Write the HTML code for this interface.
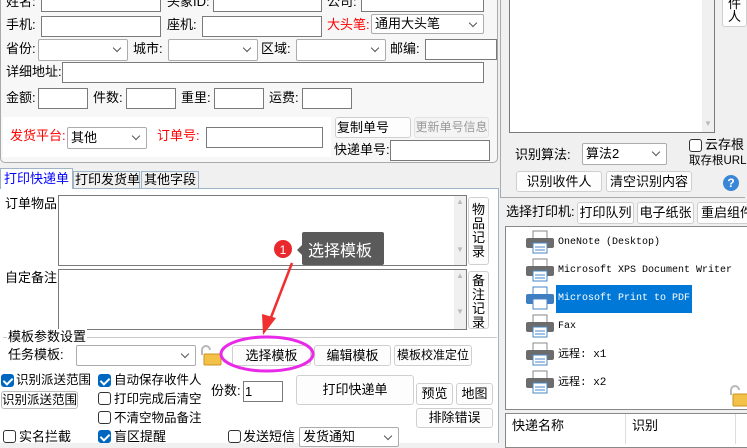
<!DOCTYPE html>
<html><head><meta charset="utf-8"><style>
*{box-sizing:border-box;margin:0;padding:0}
body{width:747px;height:443px;overflow:hidden;background:#f0f0f0;font-family:"Liberation Sans","Noto Sans CJK SC",sans-serif;font-size:13px;color:#000;position:relative}
.a{position:absolute;white-space:nowrap}
.t{position:absolute;white-space:nowrap;line-height:16px}
.in{position:absolute;background:#fff;border:1px solid #7a7a7a}
.sel{position:absolute;background:#fff;border:1px solid #acacac;border-radius:2px;padding-left:3px;line-height:18px;font-size:13px;white-space:nowrap}
.sel:after{content:"";position:absolute;right:7px;top:5px;width:5px;height:5px;border-right:1px solid #555;border-bottom:1px solid #555;transform:rotate(45deg)}
.btn{position:absolute;background:#fdfdfd;border:1px solid #cfcfcf;border-radius:3px;text-align:center;font-size:13px;white-space:nowrap;overflow:hidden}
.btn.v{white-space:normal;padding-left:3px;padding-right:3px}
.red{color:#f00}
.cb{position:absolute;width:13px;height:13px;border:1px solid #333;border-radius:3px;background:#fff}
.cb.on{background:#0067c0;border-color:#0067c0}
.cb.on:after{content:"";position:absolute;left:3px;top:1px;width:4px;height:7px;border-right:2px solid #fff;border-bottom:2px solid #fff;transform:rotate(45deg)}
.mono{font-family:"Liberation Mono","Noto Sans CJK SC",monospace;font-size:10px}
</style></head><body>
<div class="a" style="left:0;top:-2px;width:498px;height:165px;background:#f7f7f7;border:1px solid #aaa;border-top:none;border-radius:0 0 5px 5px"></div>
<div class="t" style="left:6px;top:-6px">姓名:</div><div class="in" style="left:41px;top:-2px;width:120px;height:14px"></div>
<div class="t" style="left:167px;top:-6px">头象ID:</div><div class="in" style="left:213px;top:-2px;width:109px;height:14px"></div>
<div class="t" style="left:327px;top:-6px">公司:</div><div class="in" style="left:361px;top:-2px;width:123px;height:14px"></div>
<div class="t" style="left:6px;top:17px">手机:</div><div class="in" style="left:41px;top:16px;width:120px;height:21px"></div>
<div class="t" style="left:167px;top:17px">座机:</div><div class="in" style="left:202px;top:16px;width:120px;height:21px"></div>
<div class="t red" style="left:327px;top:17px">大头笔:</div><div class="sel" style="left:371px;top:14px;width:113px;height:20px">通用大头笔</div>
<div class="t" style="left:6px;top:41px">省份:</div><div class="sel" style="left:38px;top:39px;width:90px;height:22px"></div>
<div class="t" style="left:133px;top:41px">城市:</div><div class="sel" style="left:168px;top:39px;width:90px;height:22px"></div>
<div class="t" style="left:261px;top:41px">区域:</div><div class="sel" style="left:296px;top:39px;width:90px;height:22px"></div>
<div class="t" style="left:390px;top:41px">邮编:</div><div class="in" style="left:425px;top:39px;width:72px;height:21px"></div>
<div class="t" style="left:6px;top:64px">详细地址:</div><div class="in" style="left:62px;top:62px;width:422px;height:21px"></div>
<div class="t" style="left:6px;top:90px">金额:</div><div class="in" style="left:38px;top:88px;width:50px;height:21px"></div>
<div class="t" style="left:93px;top:90px">件数:</div><div class="in" style="left:126px;top:88px;width:50px;height:21px"></div>
<div class="t" style="left:181px;top:90px">重里:</div><div class="in" style="left:214px;top:88px;width:50px;height:21px"></div>
<div class="t" style="left:269px;top:90px">运费:</div><div class="in" style="left:302px;top:88px;width:50px;height:21px"></div>
<div class="a" style="left:3px;top:117px;width:328px;height:40px;background:#fff"></div>
<div class="t red" style="left:10px;top:128px">发货平台:</div><div class="sel" style="left:67px;top:127px;width:80px;height:22px;line-height:20px">其他</div>
<div class="t red" style="left:157px;top:128px">订单号:</div><div class="in" style="left:206px;top:127px;width:117px;height:21px"></div>
<div class="btn" style="left:335px;top:117px;width:76px;height:21px;text-align:left;padding-left:1px;line-height:19px">复制单号</div>
<div class="btn" style="left:414px;top:117px;width:75px;height:21px;color:#999;background:#f4f4f4;border-color:#e3e3e3;line-height:19px;font-size:12px">更新单号信息</div>
<div class="t" style="left:334px;top:142px">快递单号:</div><div class="in" style="left:390px;top:140px;width:100px;height:21px"></div>
<div class="a" style="left:0;top:188px;width:499px;height:255px;background:#fff;border-top:1px solid #a0b4c8;border-right:1px solid #a0b4c8"></div>
<div class="a" style="left:0;top:168px;width:73px;height:21px;background:#fff;border:1px solid #a0b4c8;border-bottom:none;color:#00f;padding-left:3px;line-height:20px">打印快递单</div>
<div class="a" style="left:73px;top:171px;width:67px;height:18px;background:#f0f0f0;border:1px solid #a0b4c8;padding-left:1px;line-height:16px">打印发货单</div>
<div class="a" style="left:141px;top:171px;width:58px;height:18px;background:#f0f0f0;border:1px solid #a0b4c8;padding-left:2px;line-height:16px">其他字段</div>
<div class="t" style="left:5px;top:196px">订单物品:</div>
<div class="in" style="left:58px;top:195px;width:409px;height:71px"></div>
<div class="a" style="left:454px;top:196px;width:12px;height:69px;background:#f0f0f0;color:#bbb;font-size:8px;text-align:center;line-height:12px">▲<br><br><br><br>▼</div>
<div class="btn v" style="left:468px;top:197px;width:21px;height:68px;font-size:13px;line-height:14px;padding-top:5px">物品记录</div>
<div class="t" style="left:5px;top:270px">自定备注:</div>
<div class="in" style="left:58px;top:269px;width:409px;height:61px"></div>
<div class="a" style="left:454px;top:270px;width:12px;height:59px;background:#f0f0f0;color:#bbb;font-size:8px;text-align:center;line-height:12px">▲<br><br><br>▼</div>
<div class="btn v" style="left:468px;top:271px;width:21px;height:58px;font-size:13px;line-height:14px;padding-top:2px">备注记录</div>
<div class="a" style="left:3px;top:337px;width:494px;height:1px;background:#ccc"></div>
<div class="t" style="left:7px;top:329px;background:#fff;padding:0 1px">模板参数设置</div>
<div class="t" style="left:8px;top:347px">任务模板:</div>
<div class="sel" style="left:76px;top:345px;width:120px;height:21px"></div>
<svg class="a" style="left:199px;top:343px" width="24" height="24"><path d="M3 12V7a4 4 0 0 1 8 0" fill="none" stroke="#b8b8b8" stroke-width="2"/><rect x="5" y="11" width="17" height="11" rx="1" fill="#f3c048" stroke="#c9951c"/></svg>
<div class="btn" style="left:232px;top:345px;width:79px;height:21px;line-height:19px">选择模板</div>
<div class="btn" style="left:314px;top:345px;width:77px;height:21px;line-height:19px">编辑模板</div>
<div class="btn" style="left:394px;top:345px;width:78px;height:21px;line-height:19px;font-size:12px">模板校准定位</div>
<div class="cb on" style="left:1px;top:374px"></div><div class="t" style="left:16px;top:372px;font-size:12.5px">识别派送范围</div>
<div class="cb on" style="left:98px;top:374px"></div><div class="t" style="left:114px;top:372px;font-size:12.5px">自动保存收件人</div>
<div class="btn" style="left:1px;top:391px;width:77px;height:18px;line-height:16px;border-color:#bbb;font-size:12.5px">识别派送范围</div>
<div class="cb" style="left:98px;top:392px"></div><div class="t" style="left:114px;top:391px;font-size:12.5px">打印完成后清空</div>
<div class="cb" style="left:98px;top:411px"></div><div class="t" style="left:114px;top:410px;font-size:12.5px">不清空物品备注</div>
<div class="cb" style="left:3px;top:430px"></div><div class="t" style="left:19px;top:429px">实名拦截</div>
<div class="cb on" style="left:98px;top:430px"></div><div class="t" style="left:114px;top:429px">盲区提醒</div>
<div class="cb" style="left:228px;top:430px"></div><div class="t" style="left:243px;top:429px">发送短信</div>
<div class="sel" style="left:299px;top:427px;width:100px;height:20px">发货通知</div>
<div class="t" style="left:211px;top:383px">份数:</div><div class="in" style="left:243px;top:381px;width:40px;height:21px;padding-left:1px;line-height:19px">1</div>
<div class="btn" style="left:296px;top:375px;width:118px;height:30px;line-height:28px">打印快递单</div>
<div class="btn" style="left:416px;top:383px;width:37px;height:22px;line-height:20px">预览</div>
<div class="btn" style="left:456px;top:383px;width:37px;height:22px;line-height:20px">地图</div>
<div class="btn" style="left:416px;top:408px;width:77px;height:20px;line-height:18px">排除错误</div>
<svg class="a" style="left:0;top:0" width="500" height="443">
<ellipse cx="267" cy="354" rx="46" ry="17" fill="none" stroke="#e829e8" stroke-width="3"/>
<line x1="292" y1="263" x2="270" y2="320" stroke="#f03030" stroke-width="2.5"/>
<polygon points="263,335 262,314 276,318" fill="#f03030"/>
<circle cx="283" cy="249" r="9" fill="#e8282c"/>
<text x="283" y="254" font-size="12" fill="#fff" text-anchor="middle" font-family="Liberation Sans">1</text>
<rect x="302" y="232" width="82" height="33" rx="2" fill="#5a5a5a"/>
<polygon points="302,245 297,250 302,255" fill="#5a5a5a"/>
<text x="308" y="256" font-size="16" fill="#fff" font-family="Liberation Sans,Noto Sans CJK SC,sans-serif">选择模板</text>
</svg>
<div class="a" style="left:500px;top:-2px;width:245px;height:200px;border:1px solid #aaa;border-top:none;border-right:none"></div>
<div class="in" style="left:509px;top:-2px;width:206px;height:135px"></div>
<div class="a" style="left:702px;top:-1px;width:12px;height:133px;background:#f0f0f0;color:#bbb;font-size:8px;text-align:center;padding-top:120px">▼</div>
<div class="btn v" style="left:722px;top:-4px;width:25px;height:31px;line-height:13px;padding:0 5px">件人</div>
<div class="t" style="left:515px;top:147px">识别算法:</div>
<div class="sel" style="left:582px;top:143px;width:85px;height:22px;line-height:20px">算法2</div>
<div class="cb" style="left:689px;top:139px"></div><div class="t" style="left:705px;top:137px">云存根</div>
<div class="t" style="left:689px;top:153px;font-size:11.5px">取存根URL</div>
<div class="btn" style="left:516px;top:171px;width:86px;height:21px;line-height:19px">识别收件人</div>
<div class="btn" style="left:606px;top:171px;width:86px;height:21px;line-height:19px">清空识别内容</div>
<div class="a" style="left:723px;top:175px;width:16px;height:16px;border-radius:50%;background:#3a86d6;color:#fff;font-weight:bold;font-size:12px;text-align:center;line-height:16px">?</div>
<div class="t" style="left:506px;top:204px">选择打印机:</div>
<div class="btn" style="left:577px;top:202px;width:57px;height:22px;line-height:20px">打印队列</div>
<div class="btn" style="left:637px;top:202px;width:57px;height:22px;line-height:20px">电子纸张</div>
<div class="btn" style="left:697px;top:202px;width:55px;height:22px;line-height:20px;text-align:left;padding-left:3px">重启组件</div>
<div class="in" style="left:505px;top:226px;width:245px;height:184px;border-color:#888"></div>
<svg class="a" style="left:526px;top:229px" width="30" height="170">
<defs><g id="p"><rect x="7" y="0" width="14" height="8" fill="#fff" stroke="#888"/><rect x="0" y="7" width="28" height="10" rx="2" fill="#6c6c6c"/><rect x="7" y="12" width="14" height="10" fill="#fff" stroke="#4a86c8"/><line x1="9" y1="16" x2="19" y2="16" stroke="#4a86c8"/><line x1="9" y1="19" x2="19" y2="19" stroke="#4a86c8"/></g></defs>
<use href="#p" y="2"/><use href="#p" y="30"/>
<g transform="translate(0,58)"><rect x="7" y="0" width="14" height="8" fill="#fff" stroke="#4a86c8"/><rect x="0" y="7" width="28" height="10" rx="2" fill="#3d7fc0"/><rect x="7" y="12" width="14" height="10" fill="#fff" stroke="#4a86c8"/></g>
<use href="#p" y="86"/><use href="#p" y="114"/><use href="#p" y="142"/>
</svg>
<div class="t mono" style="left:558px;top:235px">OneNote (Desktop)</div>
<div class="t mono" style="left:558px;top:263px">Microsoft XPS Document Writer</div>
<div class="a" style="left:556px;top:285px;width:136px;height:28px;background:#0078d7"></div>
<div class="t mono" style="left:558px;top:291px;color:#fff">Microsoft Print to PDF</div>
<div class="t mono" style="left:558px;top:319px">Fax</div>
<div class="t mono" style="left:558px;top:347px;font-size:11px">远程: x1</div>
<div class="t mono" style="left:558px;top:375px;font-size:11px">远程: x2</div>
<svg class="a" style="left:728px;top:383px" width="19" height="24"><path d="M3 12V7a4 4 0 0 1 8 0" fill="none" stroke="#b8b8b8" stroke-width="2"/><rect x="5" y="11" width="17" height="12" rx="1" fill="#f3c048" stroke="#c9951c"/></svg>
<div class="in" style="left:505px;top:413px;width:245px;height:35px;border-color:#888"></div>
<div class="a" style="left:625px;top:414px;width:1px;height:30px;background:#ddd"></div>
<div class="a" style="left:735px;top:414px;width:1px;height:30px;background:#ddd"></div>
<div class="t" style="left:512px;top:418px">快递名称</div>
<div class="t" style="left:632px;top:418px">识别</div>
</body></html>
